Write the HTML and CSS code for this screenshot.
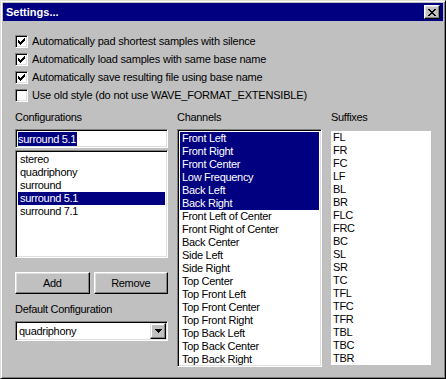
FILE: index.html
```html
<!DOCTYPE html>
<html lang="en">

<head>
    <meta charset="UTF-8">
    <title>Settings...</title>
    <link rel="stylesheet" href="styles.css">
</head>

<body>
    <div class="window">
        <div class="titlebar">
            <span class="title">Settings...</span>
            <button class="close" type="button" aria-label="Close">
                <svg width="8" height="7" viewBox="0 0 8 7" shape-rendering="crispEdges">
                    <path d="M0 0h2v1h1v1h2V1h1V0h2v1H7v1H6v1H5v1h1v1h1v1h1v1H6V6H5V5H3v1H2v1H0V6h1V5h1V4h1V3H2V2H1V1H0z" fill="#000"/>
                </svg>
            </button>
        </div>

        <div class="content">
            <div class="options">
                <label class="check"><span class="box"><svg class="tick" width="7" height="7" viewBox="0 0 7 7" shape-rendering="crispEdges"><path d="M0 2h1v3H0zM1 3h1v3H1zM2 4h1v3H2zM3 3h1v3H3zM4 2h1v3H4zM5 1h1v3H5zM6 0h1v3H6z"/></svg></span>Automatically pad shortest samples with silence</label>
                <label class="check"><span class="box"><svg class="tick" width="7" height="7" viewBox="0 0 7 7" shape-rendering="crispEdges"><path d="M0 2h1v3H0zM1 3h1v3H1zM2 4h1v3H2zM3 3h1v3H3zM4 2h1v3H4zM5 1h1v3H5zM6 0h1v3H6z"/></svg></span>Automatically load samples with same base name</label>
                <label class="check"><span class="box"><svg class="tick" width="7" height="7" viewBox="0 0 7 7" shape-rendering="crispEdges"><path d="M0 2h1v3H0zM1 3h1v3H1zM2 4h1v3H2zM3 3h1v3H3zM4 2h1v3H4zM5 1h1v3H5zM6 0h1v3H6z"/></svg></span>Automatically save resulting file using base name</label>
                <label class="check"><span class="box"></span>Use old style (do not use WAVE_FORMAT_EXTENSIBLE)</label>
            </div>

            <div class="columns">
                <div class="col col-config">
                    <div class="caption">Configurations</div>
                    <div class="field edit"><span class="selected-text">surround 5.1</span></div>
                    <ul class="field list config-list">
                        <li>stereo</li>
                        <li>quadriphony</li>
                        <li>surround</li>
                        <li class="selected">surround 5.1</li>
                        <li>surround 7.1</li>
                    </ul>
                    <div class="buttons">
                        <button type="button" class="btn">Add</button>
                        <button type="button" class="btn">Remove</button>
                    </div>
                    <div class="caption caption-default">Default Configuration</div>
                    <div class="field combo">
                        <span class="combo-text">quadriphony</span>
                        <span class="drop">
                            <svg width="7" height="4" viewBox="0 0 7 4" shape-rendering="crispEdges"><path d="M0 0h7v1H6v1H5v1H4v1H3V3H2V2H1V1H0z"/></svg>
                        </span>
                    </div>
                </div>

                <div class="col col-channels">
                    <div class="caption">Channels</div>
                    <ul class="field list channel-list">
                        <li class="selected">Front Left</li>
                        <li class="selected">Front Right</li>
                        <li class="selected">Front Center</li>
                        <li class="selected">Low Frequency</li>
                        <li class="selected">Back Left</li>
                        <li class="selected">Back Right</li>
                        <li>Front Left of Center</li>
                        <li>Front Right of Center</li>
                        <li>Back Center</li>
                        <li>Side Left</li>
                        <li>Side Right</li>
                        <li>Top Center</li>
                        <li>Top Front Left</li>
                        <li>Top Front Center</li>
                        <li>Top Front Right</li>
                        <li>Top Back Left</li>
                        <li>Top Back Center</li>
                        <li>Top Back Right</li>
                    </ul>
                </div>

                <div class="col col-suffix">
                    <div class="caption">Suffixes</div>
                    <ul class="list suffix-list">
                        <li>FL</li>
                        <li>FR</li>
                        <li>FC</li>
                        <li>LF</li>
                        <li>BL</li>
                        <li>BR</li>
                        <li>FLC</li>
                        <li>FRC</li>
                        <li>BC</li>
                        <li>SL</li>
                        <li>SR</li>
                        <li>TC</li>
                        <li>TFL</li>
                        <li>TFC</li>
                        <li>TFR</li>
                        <li>TBL</li>
                        <li>TBC</li>
                        <li>TBR</li>
                    </ul>
                </div>
            </div>
        </div>
    </div>
</body>
</html>
```

FILE: styles.css
```css
/* Okno ustawień w stylu Windows 98 */
body {
    margin: 0;
    background-color: #c0c0c0;
}
.window {
    width: 446px;
    height: 379px;
    box-sizing: border-box;
    background-color: #c0c0c0;
    border: 1px solid;
    border-color: #dfdfdf #000 #000 #dfdfdf;
    box-shadow: inset 1px 1px #fff, inset -1px -1px #808080;
    padding: 2px;
    font-family: "Liberation Sans", Arial, sans-serif;
    font-size: 11px;
    letter-spacing: -0.3px;
    color: #000;
}
.titlebar {
    height: 18px;
    display: flex;
    align-items: center;
    justify-content: space-between;
    padding: 0 3px 0 3px;
    background-color: #000080;
    color: #fff;
    font-weight: bold;
    letter-spacing: 0;
}
.close {
    width: 16px;
    height: 14px;
    box-sizing: border-box;
    padding: 0;
    display: flex;
    align-items: center;
    justify-content: center;
    background-color: #c0c0c0;
    border: 1px solid;
    border-color: #fff #000 #000 #fff;
    box-shadow: inset -1px -1px #808080, inset 1px 1px #dfdfdf;
}
.content {
    padding: 11px 12px 0 12px;
}
.options {
    display: flex;
    flex-direction: column;
    letter-spacing: -0.2px;
}
.check {
    height: 18px;
    display: flex;
    align-items: center;
    gap: 4px;
}
.box {
    width: 13px;
    height: 13px;
    box-sizing: border-box;
    display: flex;
    align-items: center;
    justify-content: center;
    background-color: #fff;
    border: 1px solid;
    border-color: #808080 #fff #fff #808080;
    box-shadow: inset 1px 1px #000, inset -1px -1px #dfdfdf;
}
.tick {
    fill: #000;
}
.columns {
    display: flex;
    gap: 9px;
    margin-top: 7px;
}
.col {
    display: flex;
    flex-direction: column;
}
.col-config {
    width: 153px;
}
.col-channels {
    width: 145px;
}
.col-suffix {
    width: 100px;
}
.caption {
    line-height: 13px;
    height: 13px;
    margin-bottom: 5px;
}
.caption-default {
    margin-top: 9px;
}
/* pola wklęsłe: edycja, listy, combo */
.field {
    box-sizing: border-box;
    background-color: #fff;
    border: 1px solid;
    border-color: #808080 #fff #fff #808080;
    box-shadow: inset 1px 1px #000, inset -1px -1px #dfdfdf;
    padding: 2px;
}
.edit {
    height: 19px;
    display: flex;
    align-items: center;
    padding-left: 2px;
}
.selected-text {
    background-color: #000080;
    color: #fff;
    line-height: 14px;
    padding-right: 1px;
}
.list {
    list-style: none;
    margin: 0;
}
.list li {
    line-height: 13px;
    height: 13px;
    padding-left: 2px;
    white-space: nowrap;
}
.list li.selected {
    background-color: #000080;
    color: #fff;
}
.config-list {
    margin-top: 2px;
    height: 108px;
}
.channel-list {
    height: 238px;
}
.suffix-list {
    margin-top: 2px;
    padding: 0;
    height: 234px;
    background-color: #fff;
}
.buttons {
    display: flex;
    gap: 4px;
    margin-top: 14px;
}
.btn {
    flex: 1;
    height: 22px;
    padding: 0;
    font: inherit;
    letter-spacing: inherit;
    color: #000;
    background-color: #c0c0c0;
    border: 1px solid;
    border-color: #fff #000 #000 #fff;
    box-shadow: inset -1px -1px #808080, inset 1px 1px #dfdfdf;
}
.combo {
    height: 20px;
    display: flex;
    align-items: center;
    justify-content: space-between;
    padding: 2px 1px 2px 2px;
}
.combo-text {
    padding-left: 1px;
}
.drop {
    width: 16px;
    height: 16px;
    box-sizing: border-box;
    display: flex;
    align-items: center;
    justify-content: center;
    background-color: #c0c0c0;
    border: 1px solid;
    border-color: #dfdfdf #000 #000 #dfdfdf;
    box-shadow: inset -1px -1px #808080, inset 1px 1px #fff;
}
```
